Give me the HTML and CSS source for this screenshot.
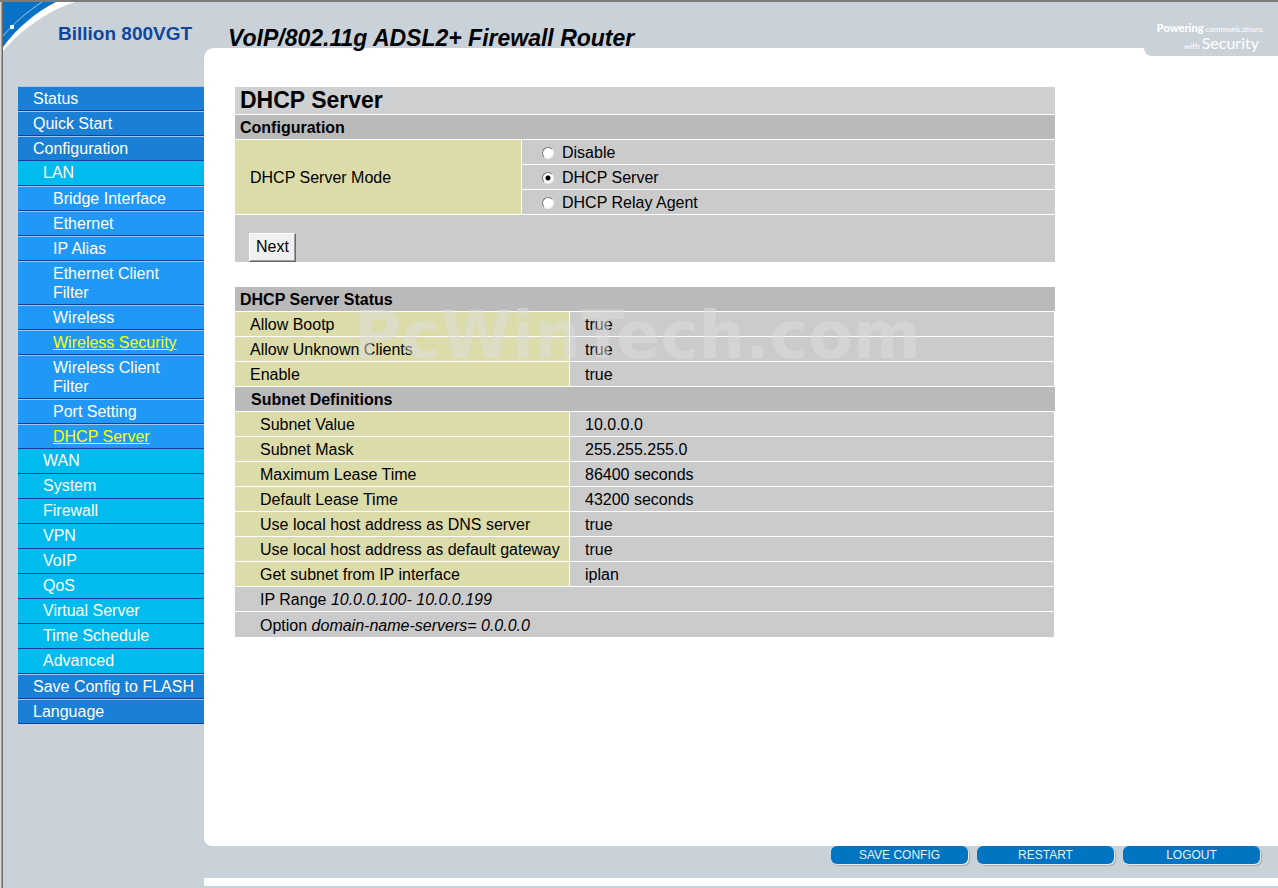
FILE: index.html
```html
<!DOCTYPE html>
<html lang="en">
<head>
<meta charset="utf-8">
<title>DHCP Server - Billion 800VGT</title>
<link rel="stylesheet" href="styles.css">
</head>
<body>
<div class="frame">
  <aside class="sidebar">
    <div class="brand">
      <svg class="corner" width="74" height="50" viewBox="0 0 74 50" aria-hidden="true">
        <path d="M0 0H72C44 9 19 27 0 49Z" fill="#fff"/>
        <path d="M0 0H53C33 10 14 26 0 45Z" fill="#0872c6"/>
        <path d="M0 34C12 20 24 10 39 0" fill="none" stroke="#a3c6e4" stroke-width="1"/>
        <rect x="7" y="23" width="4" height="4" rx="1" fill="#fff"/>
      </svg>
      <span class="model">Billion 800VGT</span>
    </div>
    <nav class="menu">
      <a class="top" href="#">Status</a>
      <a class="top" href="#">Quick Start</a>
      <a class="top" href="#">Configuration</a>
      <a class="mid" href="#">LAN</a>
      <a class="sub" href="#">Bridge Interface</a>
      <a class="sub" href="#">Ethernet</a>
      <a class="sub" href="#">IP Alias</a>
      <a class="sub" href="#">Ethernet Client Filter</a>
      <a class="sub" href="#">Wireless</a>
      <a class="sub active" href="#">Wireless Security</a>
      <a class="sub" href="#">Wireless Client Filter</a>
      <a class="sub" href="#">Port Setting</a>
      <a class="sub active" href="#"><span class="focused">DHCP Server</span></a>
      <a class="mid" href="#">WAN</a>
      <a class="mid" href="#">System</a>
      <a class="mid" href="#">Firewall</a>
      <a class="mid" href="#">VPN</a>
      <a class="mid" href="#">VoIP</a>
      <a class="mid" href="#">QoS</a>
      <a class="mid" href="#">Virtual Server</a>
      <a class="mid" href="#">Time Schedule</a>
      <a class="mid" href="#">Advanced</a>
      <a class="top" href="#">Save Config to FLASH</a>
      <a class="top" href="#">Language</a>
    </nav>
  </aside>
  <div class="page">
    <header class="header">
      <h1 class="product">VoIP/802.11g ADSL2+ Firewall Router</h1>
      <div class="slogan">
        <div class="slogan-one"><b>Powering</b> communications</div>
        <div class="slogan-two">with <span class="security">Security</span></div>
      </div>
    </header>
    <main class="content">
      <form class="panel">
        <h2 class="title">DHCP Server</h2>
        <table class="grid">
          <colgroup><col class="mode-col"><col></colgroup>
          <tr><th class="heading" colspan="2">Configuration</th></tr>
          <tr>
            <td class="name split" rowspan="3">DHCP Server Mode</td>
            <td class="option"><label><input type="radio" name="mode">Disable</label></td>
          </tr>
          <tr><td class="option"><label><input type="radio" name="mode" checked>DHCP Server</label></td></tr>
          <tr><td class="option"><label><input type="radio" name="mode">DHCP Relay Agent</label></td></tr>
        </table>
        <div class="actions"><button class="next" type="button">Next</button></div>
      </form>
      <section class="panel">
        <table class="grid status">
          <colgroup><col class="status-col"><col></colgroup>
          <tr><th class="heading" colspan="2">DHCP Server Status</th></tr>
          <tr><td class="name split">Allow Bootp</td><td class="value">true</td></tr>
          <tr><td class="name split">Allow Unknown Clients</td><td class="value">true</td></tr>
          <tr><td class="name split">Enable</td><td class="value">true</td></tr>
          <tr><th class="heading inner" colspan="2">Subnet Definitions</th></tr>
          <tr><td class="name split deep">Subnet Value</td><td class="value">10.0.0.0</td></tr>
          <tr><td class="name split deep">Subnet Mask</td><td class="value">255.255.255.0</td></tr>
          <tr><td class="name split deep">Maximum Lease Time</td><td class="value">86400 seconds</td></tr>
          <tr><td class="name split deep">Default Lease Time</td><td class="value">43200 seconds</td></tr>
          <tr><td class="name split deep">Use local host address as DNS server</td><td class="value">true</td></tr>
          <tr><td class="name split deep">Use local host address as default gateway</td><td class="value">true</td></tr>
          <tr><td class="name split deep">Get subnet from IP interface</td><td class="value">iplan</td></tr>
          <tr><td class="value deep" colspan="2">IP Range <i>10.0.0.100- 10.0.0.199</i></td></tr>
          <tr><td class="value deep last" colspan="2">Option <i>domain-name-servers= 0.0.0.0</i></td></tr>
        </table>
        <div class="watermark">PcWinTech.com</div>
      </section>
    </main>
    <footer class="footer">
      <button class="pill" type="button">SAVE CONFIG</button>
      <button class="pill" type="button">RESTART</button>
      <button class="pill" type="button">LOGOUT</button>
    </footer>
  </div>
</div>
</body>
</html>
```
FILE: styles.css
```css
* { box-sizing: border-box; }

body {
  margin: 0;
  background: #cad2d9;
  color: #000;
  font: 16px/19px "Liberation Sans", Arial, sans-serif;
}

.frame {
  display: flex;
  min-height: 100vh;
  border-top: 2px solid #7b7b79;
}

.sidebar {
  flex: 0 0 204px;
  padding: 0 0 24px 3px;
  background: linear-gradient(90deg, #d8d8d6 1px, #a0a09c 1px, #a0a09c 2px, #696969 2px, #696969 3px, #cad2d9 3px);
}

.brand {
  display: flex;
  height: 84px;
  position: relative;
}

.corner { position: absolute; left: 0; top: 0; }

.model {
  position: relative;
  margin: 21px 0 0 55px;
  color: #0d479f;
  font-weight: bold;
  font-size: 19px;
  line-height: 22px;
  white-space: nowrap;
}

.menu { display: flex; flex-direction: column; margin-left: 15px; }

.menu a {
  padding: 2px 5px 2px 15px;
  border-top: 1px solid #a9c1f3;
  border-bottom: 1px solid #113f9c;
  background: #1a80d5;
  color: #fff;
  text-decoration: none;
}

.menu .mid {
  padding: 2px 5px 3px 25px;
  border-top: 0;
  background: #02bbee;
}

.menu .sub { padding: 2px 20px 2px 35px; background: #2099f6; }

.menu .active { color: #ff0; text-decoration: underline; }

.focused { outline: 1px dotted #8d8d63; }

.page { flex: 1; display: flex; flex-direction: column; min-width: 0; }

.header {
  display: flex;
  justify-content: space-between;
  height: 46px;
}

.product {
  position: relative;
  margin: 22px 0 0 24px;
  font-size: 23px;
  line-height: 28px;
  font-style: italic;
  white-space: nowrap;
}

.slogan {
  position: relative;
  width: 134px;
  height: 54px;
  padding: 19px 15px 0 0;
  border-bottom-left-radius: 8px;
  background: #cad2d9;
  color: #fff;
  font: 8px/14px Lato, sans-serif;
  text-align: right;
  white-space: nowrap;
}

.slogan b { font-size: 11px; font-weight: 900; }
.slogan-two { padding-right: 4px; }
.security { font-size: 16px; }

.content {
  flex: 1;
  padding: 39px 31px;
  background: #fff;
  border-radius: 10px 0 0 8px;
}

.panel {
  position: relative;
  max-width: 820px;
  margin: 0 0 25px;
}

.title {
  margin: 0 0 1px;
  padding: 0 5px;
  background: #cfd0d2;
  font-size: 23px;
  line-height: 27px;
}

.grid {
  width: 100%;
  border-spacing: 0;
  table-layout: fixed;
}

.mode-col { width: 287px; }
.status-col { width: 335px; }

.grid th,
.grid td {
  height: 25px;
  padding: 3px 15px 2px;
  border-bottom: 1px solid #fff;
  text-align: left;
}

.grid .heading { padding-left: 5px; background: #bababa; }
.grid .inner { padding-left: 16px; }
.grid .name { background: #dcdbaa; }
.grid .split { border-right: 1px solid #fff; }
.grid .value,
.grid .option { background: #cbcbcb; }
.status .value { border-right: 1px solid #fff; }
.grid .option { padding-left: 20px; }
.grid .deep { padding-left: 25px; padding-right: 0; }
.grid .last { padding-top: 4px; border-bottom: 0; }

label { display: flex; align-items: center; gap: 8px; }

input[type="radio"] {
  appearance: none;
  width: 12px;
  height: 12px;
  margin: 0;
  border: 1px solid;
  border-color: #777 #eee #eee #777;
  border-radius: 50%;
  background: #fff;
}

input[type="radio"]:checked { background: radial-gradient(circle, #000 2px, #fff 3px); }

.actions { padding: 18px 14px 0; background: #cbcbcb; }

.next {
  display: block;
  padding: 4px 6px 5px;
  border: 1px solid;
  border-color: #fff #696969 #696969 #fff;
  box-shadow: inset -1px -1px 0 #a0a0a0;
  background: #f0f0f0;
  color: #000;
  font: inherit;
  line-height: 18px;
}

.watermark {
  position: absolute;
  left: 119px;
  top: 9px;
  color: rgba(222, 222, 222, 0.5);
  font: bold 65px/80px "DejaVu Sans", sans-serif;
  pointer-events: none;
}

.footer {
  display: flex;
  justify-content: flex-end;
  gap: 9px;
  height: 42px;
  padding: 0 18px;
  background: linear-gradient(#cad2d9 32px, #fcfdfd 32px, #fcfdfd 40px, #cad2d9 40px);
}

.pill {
  width: 137px;
  height: 18px;
  padding: 0;
  border: 0;
  border-radius: 6px;
  background: #0274c1;
  box-shadow: 1px 1px 0 #e5edf3, 2px 2px 1px #aaa9ae;
  color: #e4f1fa;
  font: 12px/18px "Liberation Sans", Arial, sans-serif;
}
```
